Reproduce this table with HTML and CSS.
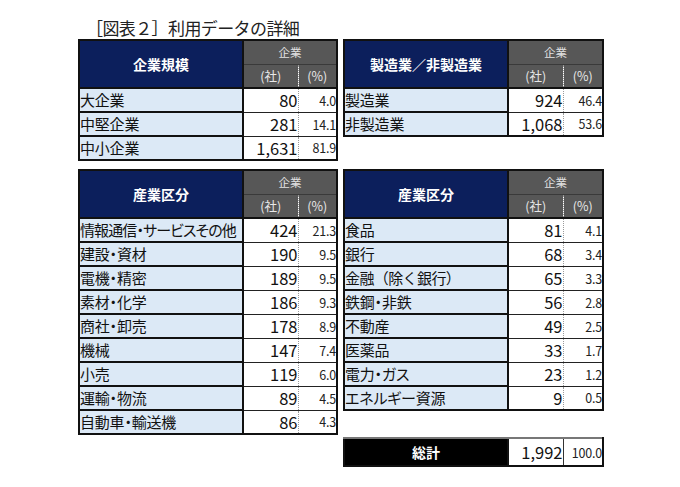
FILE: index.html
```html
<!DOCTYPE html>
<html lang="ja">
<head>
<meta charset="utf-8">
<link rel="stylesheet" href="styles.css">
</head>
<body>
<div class="page">
  <h1 class="title">［図表２］利用データの詳細</h1>
  <div class="grid">
    <table class="tbl">
      <colgroup><col class="c-label"><col class="c-num"><col class="c-pct"></colgroup>
      <thead>
        <tr><th rowspan="2" class="hd">企業規模</th><th colspan="2" class="gh">企業</th></tr>
        <tr><th class="gh2 sep">(社)</th><th class="gh2">(%)</th></tr>
      </thead>
      <tbody>
        <tr><td class="lbl">大企業</td><td class="num">80</td><td class="pct">4.0</td></tr>
        <tr><td class="lbl">中堅企業</td><td class="num">281</td><td class="pct">14.1</td></tr>
        <tr><td class="lbl">中小企業</td><td class="num">1,631</td><td class="pct">81.9</td></tr>
      </tbody>
    </table>

    <table class="tbl tbl-r">
      <colgroup><col class="c-label"><col class="c-num"><col class="c-pct-r"></colgroup>
      <thead>
        <tr><th rowspan="2" class="hd">製造業／非製造業</th><th colspan="2" class="gh">企業</th></tr>
        <tr><th class="gh2 sep">(社)</th><th class="gh2">(%)</th></tr>
      </thead>
      <tbody>
        <tr><td class="lbl">製造業</td><td class="num">924</td><td class="pct">46.4</td></tr>
        <tr><td class="lbl">非製造業</td><td class="num">1,068</td><td class="pct">53.6</td></tr>
      </tbody>
    </table>

    <table class="tbl">
      <colgroup><col class="c-label"><col class="c-num"><col class="c-pct"></colgroup>
      <thead>
        <tr><th rowspan="2" class="hd">産業区分</th><th colspan="2" class="gh">企業</th></tr>
        <tr><th class="gh2 sep">(社)</th><th class="gh2">(%)</th></tr>
      </thead>
      <tbody>
        <tr><td class="lbl tight">情報通信・サービスその他</td><td class="num">424</td><td class="pct">21.3</td></tr>
        <tr><td class="lbl">建設・資材</td><td class="num">190</td><td class="pct">9.5</td></tr>
        <tr><td class="lbl">電機・精密</td><td class="num">189</td><td class="pct">9.5</td></tr>
        <tr><td class="lbl">素材・化学</td><td class="num">186</td><td class="pct">9.3</td></tr>
        <tr><td class="lbl">商社・卸売</td><td class="num">178</td><td class="pct">8.9</td></tr>
        <tr><td class="lbl">機械</td><td class="num">147</td><td class="pct">7.4</td></tr>
        <tr><td class="lbl">小売</td><td class="num">119</td><td class="pct">6.0</td></tr>
        <tr><td class="lbl">運輸・物流</td><td class="num">89</td><td class="pct">4.5</td></tr>
        <tr><td class="lbl">自動車・輸送機</td><td class="num">86</td><td class="pct">4.3</td></tr>
      </tbody>
    </table>

    <div class="stack">
      <table class="tbl tbl-r">
        <colgroup><col class="c-label"><col class="c-num"><col class="c-pct-r"></colgroup>
        <thead>
          <tr><th rowspan="2" class="hd">産業区分</th><th colspan="2" class="gh">企業</th></tr>
          <tr><th class="gh2 sep">(社)</th><th class="gh2">(%)</th></tr>
        </thead>
        <tbody>
          <tr><td class="lbl">食品</td><td class="num">81</td><td class="pct">4.1</td></tr>
          <tr><td class="lbl">銀行</td><td class="num">68</td><td class="pct">3.4</td></tr>
          <tr><td class="lbl wide">金融（除く銀行）</td><td class="num">65</td><td class="pct">3.3</td></tr>
          <tr><td class="lbl">鉄鋼・非鉄</td><td class="num">56</td><td class="pct">2.8</td></tr>
          <tr><td class="lbl">不動産</td><td class="num">49</td><td class="pct">2.5</td></tr>
          <tr><td class="lbl">医薬品</td><td class="num">33</td><td class="pct">1.7</td></tr>
          <tr><td class="lbl">電力・ガス</td><td class="num">23</td><td class="pct">1.2</td></tr>
          <tr><td class="lbl">エネルギー資源</td><td class="num">9</td><td class="pct">0.5</td></tr>
        </tbody>
      </table>

      <table class="tbl tbl-r total">
        <colgroup><col class="c-label"><col class="c-num"><col class="c-pct-r"></colgroup>
        <tbody>
          <tr><td class="tot">総計</td><td class="num">1,992</td><td class="pct tot-pct">100.0</td></tr>
        </tbody>
      </table>
    </div>
  </div>
</div>
</body>
</html>
```

FILE: styles.css
```css
* { box-sizing: border-box; }

html, body {
  margin: 0;
  padding: 0;
  background: #ffffff;
}

body {
  font-family: "Noto Sans CJK JP", "Noto Sans", sans-serif;
  color: #111;
}

.page {
  padding: 17px 0 0 78px;
}

.title {
  margin: 0 0 0 8px;
  font-size: 17px;
  line-height: 22px;
  font-weight: 400;
  color: #222;
  letter-spacing: -0.6px;
}

.grid {
  display: grid;
  grid-template-columns: 258px 259px;
  column-gap: 7px;
  row-gap: 8px;
  align-items: start;
}

.stack {
  display: flex;
  flex-direction: column;
  gap: 26px;
}

.tbl {
  border-collapse: collapse;
  table-layout: fixed;
  width: 258px;
  border: 2px solid #111;
}

.tbl-r { width: 259px; }

.c-label { width: 164px; }
.c-num { width: 55px; }
.c-pct { width: 39px; }
.c-pct-r { width: 40px; }

.tbl th, .tbl td {
  padding: 0;
  overflow: hidden;
  white-space: nowrap;
}

.tbl thead tr { height: 24px; }
.tbl tbody tr { height: 24px; }

.hd {
  background: #0c1f5c;
  color: #fff;
  font-size: 14px;
  font-weight: 700;
  text-align: center;
  border-right: 2px solid #111;
  border-bottom: 2px solid #111;
}

.gh {
  background: #575757;
  color: #e2e2e2;
  font-size: 11.5px;
  font-weight: 400;
  text-align: center;
  border-bottom: 1px solid #3a3a3a;
}

.gh2 {
  background: #575757;
  color: #e8e8e8;
  font-size: 12.5px;
  font-weight: 400;
  text-align: center;
  border-bottom: 2px solid #111;
}

.gh2.sep { border-right: 1px dotted #9a9a9a; }

.lbl {
  background: #dce9f6;
  font-size: 15px;
  line-height: 20px;
  padding-left: 3px;
  padding-top: 2px;
  font-feature-settings: "palt";
  letter-spacing: -0.2px;
  border-right: 2px solid #111;
  border-bottom: 2px solid #111;
  color: #111;
}

.lbl.tight {
  letter-spacing: -0.9px;
}

.lbl.wide {
  font-feature-settings: normal;
  letter-spacing: -0.6px;
}

.num {
  background: #fff;
  font-size: 16.5px;
  line-height: 20px;
  text-align: right;
  padding-right: 3px;
  padding-top: 1px;
  border-bottom: 1px solid #222;
  border-right: 1px dotted #9a9a9a;
  color: #111;
}

.pct {
  background: #fff;
  font-size: 12.5px;
  text-align: right;
  padding-right: 1px;
  padding-top: 2px;
  border-bottom: 1px solid #222;
  color: #222;
  letter-spacing: -0.2px;
}

.total { border: 2px solid #111; border-top-color: #777; }
.total tbody tr { height: 28px; }

.tot {
  background: #000;
  color: #fff;
  font-size: 14px;
  font-weight: 700;
  text-align: center;
}

.total .num {
  border: 2px solid #111;
  border-top-color: #777;
  border-right: 1px solid #333;
}

.tot-pct { font-size: 12.5px; }
```
